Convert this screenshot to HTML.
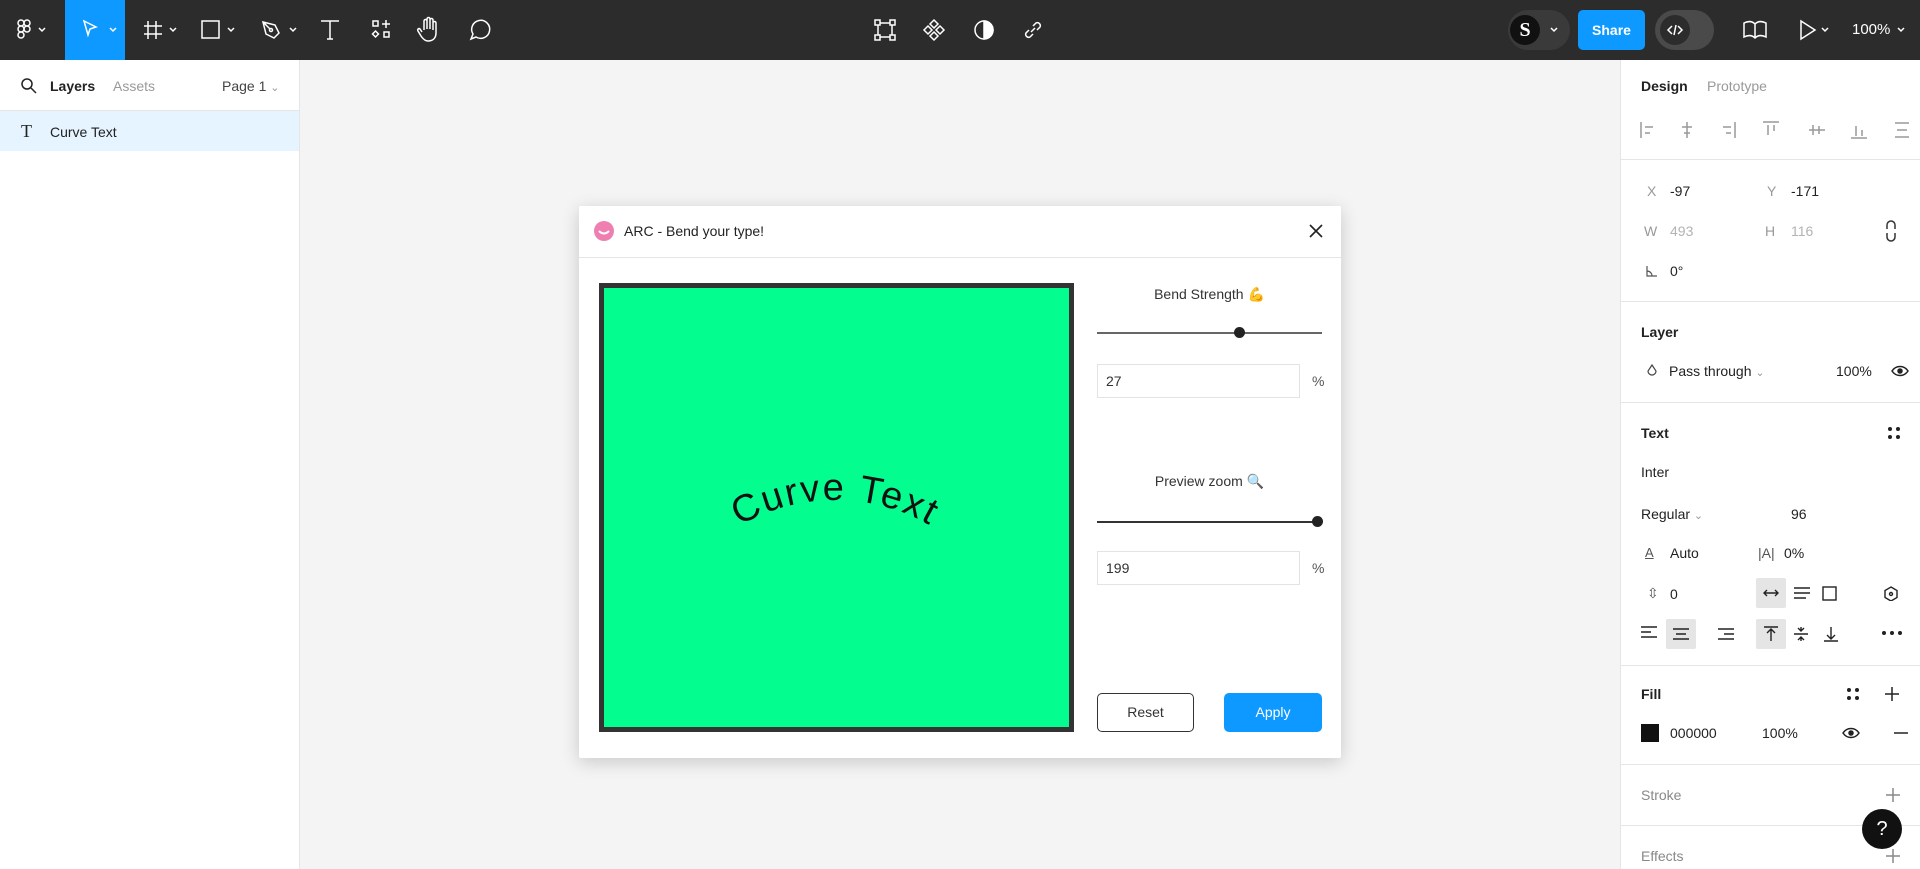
<!DOCTYPE html>
<html style="overflow:hidden;height:869px"><head><meta charset="utf-8"><style>
*{margin:0;padding:0;box-sizing:border-box}
body{width:1920px;height:869px;overflow:hidden;background:#f4f4f4;font-family:"Liberation Sans",sans-serif;font-size:14px;color:#222;position:relative}
.a{position:absolute}
.tb{left:0;top:0;width:1920px;height:60px;background:#2c2c2c}
.ic{position:absolute;stroke:#fff;fill:none;stroke-width:1.5}
.lp{left:0;top:60px;width:300px;height:809px;background:#fff;border-right:1px solid #e5e5e5;overflow:hidden}
.rp{left:1620px;top:60px;width:300px;height:809px;background:#fff;border-left:1px solid #e5e5e5;overflow:hidden}
.hr{position:absolute;left:0;width:300px;height:1px;background:#e5e5e5}
.g{color:#999}
.t{position:absolute;font-size:14px;line-height:16px}
.b{font-weight:bold}
</style></head><body>
<div class="a tb">
 <svg class="ic" style="left:16px;top:18px" width="40" height="24" viewBox="0 0 40 24"><rect x="2" y="2" width="6" height="6" rx="3"/><rect x="8" y="2" width="6" height="6" rx="3"/><rect x="2" y="8" width="6" height="6" rx="3"/><circle cx="11" cy="11" r="3"/><rect x="2" y="14" width="6" height="6" rx="3"/><path d="M23 10l3 3 3-3"/></svg>
 <div class="a" style="left:65px;top:0;width:60px;height:60px;background:#0d99ff"></div>
 <svg class="ic" style="left:80px;top:18px" width="44" height="24"><path d="M4 3l12 6-6 2-2 6z"/><path d="M30 10l3 3 3-3"/></svg>
 <svg class="ic" style="left:142px;top:18px" width="44" height="24"><path d="M6 3v18M14 3v18M2 8h18M2 16h18"/><path d="M28 10l3 3 3-3"/></svg>
 <svg class="ic" style="left:200px;top:18px" width="44" height="24"><rect x="2" y="3" width="17" height="17"/><path d="M28 10l3 3 3-3"/></svg>
 <svg class="ic" style="left:260px;top:18px" width="44" height="24"><path d="M3 4l12 3 4 8-5 5-8-4z M3 4l7 7"/><circle cx="11" cy="12" r="1.5"/><path d="M30 10l3 3 3-3"/></svg>
 <svg class="ic" style="left:318px;top:18px" width="24" height="24"><path d="M3 3h18M12 3v18M9 21h6"/></svg>
 <svg class="ic" style="left:370px;top:18px" width="24" height="24"><rect x="3" y="3" width="5" height="5"/><path d="M16 2v8M12 6h8"/><path d="M5.5 13l3 3-3 3-3-3z"/><rect x="14" y="14" width="5" height="5"/></svg>
 <svg class="ic" style="left:416px;top:15px" width="26" height="28"><path d="M8 15V6a1.5 1.5 0 013 0v8V4a1.5 1.5 0 013 0v10V5a1.5 1.5 0 013 0v10V8a1.5 1.5 0 013 0v10c0 5-3 8-8 8-3 0-5-2-7-5l-3-5c-1-2 1-3 2-2l2 3"/></svg>
 <svg class="ic" style="left:466px;top:17px" width="26" height="26"><path d="M5 22l2-5a9 9 0 113 3z"/></svg>
 <svg class="ic" style="left:873px;top:18px" width="24" height="24"><rect x="5" y="5" width="14" height="14"/><rect x="2" y="2" width="5" height="5" fill="#2c2c2c"/><rect x="17" y="2" width="5" height="5" fill="#2c2c2c"/><rect x="2" y="17" width="5" height="5" fill="#2c2c2c"/><rect x="17" y="17" width="5" height="5" fill="#2c2c2c"/></svg>
 <svg class="ic" style="left:922px;top:18px" width="24" height="24"><path d="M12 2l4 4-4 4-4-4zM12 14l4 4-4 4-4-4zM6 8l4 4-4 4-4-4zM18 8l4 4-4 4-4-4z"/></svg>
 <svg class="ic" style="left:972px;top:18px" width="24" height="24"><circle cx="12" cy="12" r="9"/><path d="M12 3a9 9 0 010 18z" fill="#fff"/></svg>
 <svg class="ic" style="left:1021px;top:18px" width="24" height="24"><path d="M10 14l4-4M8 12l-3 3a3 3 0 004 4l3-3M16 12l3-3a3 3 0 00-4-4l-3 3"/></svg>
 <div class="a" style="left:1508px;top:10px;width:62px;height:40px;border-radius:20px;background:#3a3a3a"></div>
 <div class="a" style="left:1510px;top:15px;width:30px;height:30px;border-radius:50%;background:#111;color:#fff;font:bold 20px 'Liberation Serif',serif;text-align:center;line-height:30px">S</div>
 <svg class="ic" style="left:1549px;top:24px" width="12" height="12"><path d="M2 4l3 3 3-3"/></svg>
 <div class="a" style="left:1578px;top:10px;width:67px;height:40px;border-radius:5px;background:#0d99ff;color:#fff;font-weight:bold;font-size:14px;text-align:center;line-height:40px">Share</div>
 <div class="a" style="left:1655px;top:10px;width:59px;height:40px;border-radius:20px;background:#4a4a4a"></div>
 <div class="a" style="left:1660px;top:15px;width:30px;height:30px;border-radius:50%;background:#2c2c2c"></div>
 <svg class="ic" style="left:1666px;top:21px" width="18" height="18"><path d="M6 5l-4 4 4 4M12 5l4 4-4 4M10 4l-2 10"/></svg>
 <svg class="ic" style="left:1742px;top:19px" width="26" height="22"><path d="M2 4c4-2 8-2 11 1 3-3 7-3 11-1v14c-4-2-8-2-11 1-3-3-7-3-11-1zM13 5v14"/></svg>
 <svg class="ic" style="left:1798px;top:18px" width="40" height="24"><path d="M3 3l14 9-14 9z"/><path d="M24 10l3 3 3-3"/></svg>
 <div class="a" style="left:1852px;top:21px;color:#fff;font-size:15px">100%</div>
 <svg class="ic" style="left:1896px;top:24px" width="12" height="12"><path d="M2 4l3 3 3-3"/></svg>
</div>

<div class="a lp">
 <svg class="a" style="left:20px;top:17px" width="18" height="18" fill="none" stroke="#222" stroke-width="1.5"><circle cx="7" cy="7" r="5"/><path d="M11 11l5 5"/></svg>
 <div class="t b" style="left:50px;top:18px">Layers</div>
 <div class="t g" style="left:113px;top:18px">Assets</div>
 <div class="t" style="left:222px;top:18px;color:#444">Page 1 <span class="g" style="font-size:11px">⌄</span></div>
 <div class="hr" style="top:50px"></div>
 <div class="a" style="left:0;top:51px;width:300px;height:40px;background:#e5f4ff"></div>
 <div class="t" style="left:21px;top:63px;font-family:'Liberation Serif',serif;font-size:18px">T</div>
 <div class="t" style="left:50px;top:64px">Curve Text</div>
</div>

<div class="a rp">
 <div class="t b" style="left:20px;top:18px">Design</div>
 <div class="t g" style="left:86px;top:18px">Prototype</div>
 <svg class="a" style="left:18px;top:58px" width="270" height="24" fill="none" stroke="#999" stroke-width="1.5">
  <path d="M2 4v16M6 9h8M6 15h5"/><path d="M48 4v16M43 9h10M45 15h6"/><path d="M96 4v16M84 9h8M87 15h5"/><path d="M124 4h16M129 7v10M135 7v6"/><path d="M170 12h16M174 7v10M180 8v8"/><path d="M212 20h16M217 8v10M223 12v6"/><path d="M256 5h14M258 12h10M256 19h14"/>
 </svg>
 <div class="hr" style="top:99px"></div>
 <div class="t g" style="left:26px;top:123px">X</div><div class="t" style="left:49px;top:123px">-97</div>
 <div class="t g" style="left:146px;top:123px">Y</div><div class="t" style="left:170px;top:123px">-171</div>
 <div class="t g" style="left:23px;top:163px">W</div><div class="t g" style="left:49px;top:163px;color:#b3b3b3">493</div>
 <div class="t g" style="left:144px;top:163px">H</div><div class="t" style="left:170px;top:163px;color:#b3b3b3">116</div>
 <svg class="a" style="left:264px;top:160px" width="12" height="22" fill="none" stroke="#333" stroke-width="1.5"><path d="M2 9V5a4 4 0 018 0v4M2 13v4a4 4 0 008 0v-4"/></svg>
 <svg class="a" style="left:24px;top:204px" width="14" height="14" fill="none" stroke="#555" stroke-width="1.2"><path d="M2 2v10h10M2 7a5 5 0 015 5"/></svg>
 <div class="t" style="left:49px;top:203px">0°</div>
 <div class="hr" style="top:241px"></div>
 <div class="t b" style="left:20px;top:264px">Layer</div>
 <svg class="a" style="left:24px;top:303px" width="14" height="16" fill="none" stroke="#444" stroke-width="1.2"><path d="M7 2l4 6a4 4 0 11-8 0z"/></svg>
 <div class="t" style="left:48px;top:303px">Pass through <span class="g" style="font-size:11px">⌄</span></div>
 <div class="t" style="left:215px;top:303px">100%</div>
 <svg class="a" style="left:270px;top:304px" width="18" height="14" fill="none" stroke="#222" stroke-width="1.5"><path d="M1 7c4-6 12-6 16 0-4 6-12 6-16 0z"/><circle cx="9" cy="7" r="2" fill="#222"/></svg>
 <div class="hr" style="top:342px"></div>
 <div class="t b" style="left:20px;top:365px">Text</div>
 <svg class="a" style="left:266px;top:366px" width="14" height="14" fill="#222"><circle cx="3" cy="3" r="2"/><circle cx="11" cy="3" r="2"/><circle cx="3" cy="11" r="2"/><circle cx="11" cy="11" r="2"/></svg>
 <div class="t" style="left:20px;top:404px">Inter</div>
 <div class="t" style="left:20px;top:446px">Regular <span class="g" style="font-size:11px">⌄</span></div>
 <div class="t" style="left:170px;top:446px">96</div>
 <div class="t" style="left:24px;top:485px;font-size:13px;color:#555;text-decoration:underline">A</div>
 <div class="t" style="left:49px;top:485px">Auto</div>
 <div class="t" style="left:137px;top:485px;color:#555">|A|</div>
 <div class="t" style="left:163px;top:485px">0%</div>
 <div class="t" style="left:26px;top:525px;color:#555">⇳</div>
 <div class="t" style="left:49px;top:526px">0</div>
 <div class="a" style="left:135px;top:518px;width:30px;height:30px;background:#e5e5e5;border-radius:2px"></div>
 <svg class="a" style="left:135px;top:518px" width="110" height="30" fill="none" stroke="#222" stroke-width="1.4"><path d="M8 15h14M11 12l-3 3 3 3M19 12l3 3-3 3"/><path d="M38 10h16M38 15h16M38 20h12"/><rect x="67" y="9" width="13" height="13"/></svg>
 <svg class="a" style="left:262px;top:525px" width="16" height="16" fill="none" stroke="#222" stroke-width="1.4"><path d="M8 2l6 3.5v7L8 16 2 12.5v-7z"/><circle cx="8" cy="9" r="1.5"/></svg>
 <svg class="a" style="left:18px;top:558px" width="80" height="30" fill="none" stroke="#222" stroke-width="1.4"><path d="M2 9h16M2 14h10M2 19h16"/></svg>
 <div class="a" style="left:45px;top:559px;width:30px;height:30px;background:#e5e5e5;border-radius:2px"></div>
 <svg class="a" style="left:45px;top:559px" width="80" height="30" fill="none" stroke="#222" stroke-width="1.4"><path d="M7 10h16M10 15h10M7 20h16"/><path d="M52 10h16M58 15h10M52 20h16"/></svg>
 <div class="a" style="left:135px;top:559px;width:30px;height:30px;background:#e5e5e5;border-radius:2px"></div>
 <svg class="a" style="left:135px;top:559px" width="110" height="30" fill="none" stroke="#222" stroke-width="1.4"><path d="M8 8h14M15 22V11M11 14l4-4 4 4"/><path d="M38 15h14M45 8v4M42 9l3 3 3-3M45 22v-4M42 21l3-3 3 3"/><path d="M68 22h14M75 8v11M71 16l4 4 4-4"/></svg>
 <svg class="a" style="left:260px;top:570px" width="22" height="6" fill="#222"><circle cx="3" cy="3" r="2"/><circle cx="11" cy="3" r="2"/><circle cx="19" cy="3" r="2"/></svg>
 <div class="hr" style="top:605px"></div>
 <div class="t b" style="left:20px;top:626px">Fill</div>
 <svg class="a" style="left:225px;top:627px" width="60" height="14" fill="#222"><circle cx="3" cy="3" r="2"/><circle cx="11" cy="3" r="2"/><circle cx="3" cy="11" r="2"/><circle cx="11" cy="11" r="2"/><path d="M46 0v14M39 7h14" stroke="#222" stroke-width="1.5"/></svg>
 <div class="a" style="left:20px;top:664px;width:18px;height:18px;background:#111"></div>
 <div class="t" style="left:49px;top:665px">000000</div>
 <div class="t" style="left:141px;top:665px">100%</div>
 <svg class="a" style="left:221px;top:666px" width="70" height="14" fill="none" stroke="#222" stroke-width="1.5"><path d="M1 7c4-6 12-6 16 0-4 6-12 6-16 0z"/><circle cx="9" cy="7" r="2" fill="#222"/><path d="M52 7h14"/></svg>
 <div class="hr" style="top:704px"></div>
 <div class="t" style="left:20px;top:727px;color:#888">Stroke</div>
 <svg class="a" style="left:264px;top:727px" width="16" height="16" stroke="#888" stroke-width="1.5"><path d="M8 1v14M1 8h14"/></svg>
 <div class="hr" style="top:765px"></div>
 <div class="t" style="left:20px;top:788px;color:#888">Effects</div>
 <svg class="a" style="left:264px;top:788px" width="16" height="16" stroke="#888" stroke-width="1.5"><path d="M8 1v14M1 8h14"/></svg>
 <div class="a" style="left:241px;top:749px;width:40px;height:40px;border-radius:50%;background:#111;color:#fff;font-size:20px;text-align:center;line-height:40px">?</div>
</div>

<div class="a" style="left:579px;top:206px;width:762px;height:552px;background:#fff;box-shadow:0 4px 18px rgba(0,0,0,.18);border-radius:2px">
 <div class="a" style="left:15px;top:15px;width:20px;height:20px;border-radius:50%;background:#ef7fb1"></div>
 <svg class="a" style="left:15px;top:15px" width="20" height="20" fill="none" stroke="#fff" stroke-width="2"><path d="M5 10q5 5 10 0"/></svg>
 <div class="t" style="left:45px;top:17px;font-size:14px">ARC - Bend your type!</div>
 <svg class="a" style="left:729px;top:17px" width="16" height="16" stroke="#222" stroke-width="1.6"><path d="M2 2l12 12M14 2L2 14"/></svg>
 <div class="a" style="left:0;top:51px;width:762px;height:1px;background:#e5e5e5"></div>
 <div class="a" style="left:20px;top:77px;width:475px;height:449px;background:#04fd8f;border:5px solid #333"></div>
 <svg class="a" style="left:20px;top:77px" width="475" height="449">
  <defs><path id="arc" d="M46 407 A190 190 0 0 1 426 407"/></defs>
  <text font-family="Liberation Sans,sans-serif" font-size="38" letter-spacing="2" fill="#111" text-anchor="middle"><textPath href="#arc" startOffset="50%">Curve Text</textPath></text>
 </svg>
 <div class="t" style="left:518px;top:80px;width:225px;text-align:center;color:#333">Bend Strength <span style="color:#e783b4">💪</span></div>
 <div class="a" style="left:518px;top:126px;width:225px;height:2px;background:#666"></div>
 <div class="a" style="left:655px;top:121px;width:11px;height:11px;border-radius:50%;background:#222"></div>
 <div class="a" style="left:518px;top:158px;width:203px;height:34px;border:1px solid #e3e3e3"></div>
 <div class="t" style="left:527px;top:167px;color:#333">27</div>
 <div class="t" style="left:733px;top:167px;color:#555">%</div>
 <div class="t" style="left:518px;top:267px;width:225px;text-align:center;color:#333">Preview zoom <span style="color:#3a8be0">🔍</span></div>
 <div class="a" style="left:518px;top:315px;width:225px;height:2px;background:#333"></div>
 <div class="a" style="left:733px;top:310px;width:11px;height:11px;border-radius:50%;background:#222"></div>
 <div class="a" style="left:518px;top:345px;width:203px;height:34px;border:1px solid #e3e3e3"></div>
 <div class="t" style="left:527px;top:354px;color:#333">199</div>
 <div class="t" style="left:733px;top:354px;color:#555">%</div>
 <div class="a" style="left:518px;top:487px;width:97px;height:39px;border:1px solid #333;border-radius:5px;text-align:center;line-height:37px;color:#333">Reset</div>
 <div class="a" style="left:645px;top:487px;width:98px;height:39px;background:#0d99ff;border-radius:5px;text-align:center;line-height:39px;color:#fff">Apply</div>
</div>
</body></html>
